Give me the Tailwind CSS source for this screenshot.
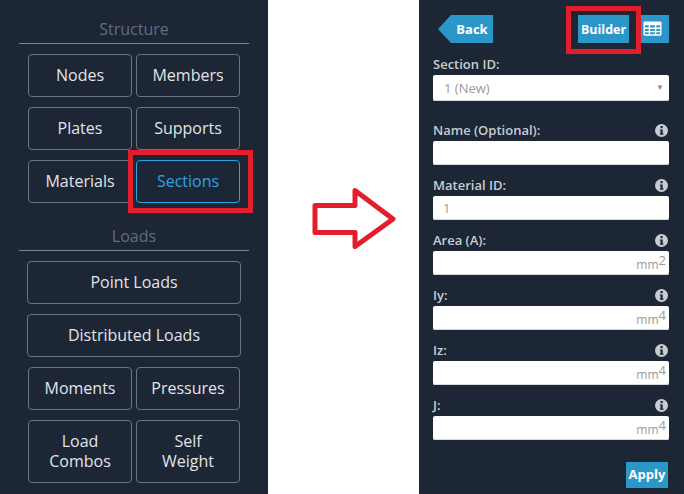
<!DOCTYPE html>
<html lang="en">

<head>
    <meta charset="UTF-8">
    <title>Sections</title>
    <script src="https://cdn.jsdelivr.net/npm/@tailwindcss/browser@4"></script>
</head>

<body class="bg-white">

    <div class="relative flex w-[684px] h-[494px] overflow-hidden font-['Open_Sans',sans-serif]">

        <!-- Left menu -->
        <aside class="w-[268px] h-full bg-[#1c2635] px-[19px] pt-[19px] shrink-0">
            <h2 class="h-[24px] border-b border-[#7b8494] text-center text-[16px] leading-[20px] text-[#626d80] box-content">Structure</h2>
            <div class="mt-[10px] px-[9px] grid grid-cols-2 gap-x-[4px] gap-y-[10px] text-[16px] text-[#e2e4e7]">
                <button class="h-[43px] pb-[2px] border border-[#6b7486] rounded-[4px]">Nodes</button>
                <button class="h-[43px] pb-[2px] border border-[#6b7486] rounded-[4px]">Members</button>
                <button class="h-[43px] pb-[2px] border border-[#6b7486] rounded-[4px]">Plates</button>
                <button class="h-[43px] pb-[2px] border border-[#6b7486] rounded-[4px]">Supports</button>
                <button class="h-[43px] pb-[2px] border border-[#6b7486] rounded-[4px]">Materials</button>
                <button class="h-[43px] pb-[2px] border border-[#2aa3ea] rounded-[4px] text-[#2aa3ea]">Sections</button>
            </div>

            <h2 class="mt-[23px] h-[24px] border-b border-[#7b8494] text-center text-[16px] leading-[20px] text-[#626d80] box-content">Loads</h2>
            <div class="mt-[10px] px-[8px] flex flex-col gap-y-[10px] text-[16px] text-[#e2e4e7]">
                <button class="h-[43px] pb-[2px] border border-[#6b7486] rounded-[4px]">Point Loads</button>
                <button class="h-[43px] pb-[2px] border border-[#6b7486] rounded-[4px]">Distributed Loads</button>
            </div>
            <div class="mt-[10px] px-[9px] grid grid-cols-2 gap-x-[4px] gap-y-[10px] text-[16px] leading-[20px] text-[#e2e4e7]">
                <button class="h-[43px] pb-[2px] border border-[#6b7486] rounded-[4px]">Moments</button>
                <button class="h-[43px] pb-[2px] border border-[#6b7486] rounded-[4px]">Pressures</button>
                <button class="h-[63px] pb-[2px] border border-[#6b7486] rounded-[4px]">Load<br>Combos</button>
                <button class="h-[63px] pb-[2px] border border-[#6b7486] rounded-[4px]">Self<br>Weight</button>
            </div>
        </aside>

        <!-- Arrow -->
        <div class="w-[151px] h-full bg-white shrink-0">
            <svg class="mt-[185px] ml-[42px]" width="88" height="66" viewBox="0 0 88 66" fill="#fff" stroke="#e31e2c" stroke-width="5" stroke-linejoin="round">
                <path d="M5 20.500H45V5.500L83 34L45 61.500V47.500H5Z"></path>
            </svg>
        </div>

        <!-- Section form -->
        <main class="flex-1 h-full bg-[#1c2635] pl-[14px] pr-[15px] pt-[15px]">
            <div class="flex items-center h-[28px]">
                <div class="w-0 h-0 border-y-[14px] border-y-transparent border-r-[13px] border-r-[#2b96c8] ml-[5px]"></div>
                <button class="h-[28px] w-[42px] pt-[2px] bg-[#2b96c8] text-white text-[13px] font-bold">Back</button>
                <button class="ml-[85px] h-[28px] w-[51px] pt-[2px] bg-[#2b96c8] text-white text-[12.500px] font-bold">Builder</button>
                <button class="ml-[12px] h-[28px] w-[28px] pb-[1px] bg-[#2b96c8] flex items-center pl-[2px]">
                    <svg width="19" height="15" viewBox="0 0 20 15" fill="#fff">
                        <path fill-rule="evenodd" d="M2 0H18A1.500 1.500 0 0 1 19.500 1.500V13.500A1.500 1.500 0 0 1 18 15H2A1.500 1.500 0 0 1 .5 13.500V1.500A1.500 1.500 0 0 1 2 0ZM2 4V6.500H6V4ZM7.500 4V6.500H12.500V4ZM14 4V6.500H18V4ZM2 8V10H6V8ZM7.500 8V10H12.500V8ZM14 8V10H18V8ZM2 11.500V13.500H6V11.500ZM7.500 11.500V13.500H12.500V11.500ZM14 11.500V13.500H18V11.500Z"></path>
                    </svg>
                </button>
            </div>

            <label class="block mt-[13px] h-[19px] text-[13px] leading-[16px] font-semibold text-[#c9ccd1]">Section ID:</label>
            <div class="h-[26px] bg-white rounded-[2px] shadow-[inset_0_-1px_0_#d5d7da] flex items-center justify-between pl-[11px] pr-[5px] text-[13px] text-[#9a9a9a]">
                <span class="pt-[1px]">1 (New)</span>
                <span class="text-[8px] leading-[8px] mb-[2px] text-[#8a8a8a]">▼</span>
            </div>

            <div class="mt-[21px] flex flex-col gap-y-[12px]">
                <div>
                    <div class="h-[19px] pr-[1px] flex justify-between items-start text-[13px] leading-[16px] font-semibold text-[#c9ccd1]">
                        <span>Name (Optional):</span>
                        <svg class="mt-[2px]" width="13" height="13" viewBox="0 0 13 13"><circle cx="6.500" cy="6.500" r="6.500" fill="#c9ccd1"></circle><rect x="5.500" y="2" width="2.200" height="2.200" fill="#1c2635"></rect><path d="M4.800 5.400H7.700V9.600H8.500V10.800H4.800V9.600H5.500V6.600H4.800Z" fill="#1c2635"></path></svg>
                    </div>
                    <div class="h-[24px] bg-white rounded-[2px] shadow-[inset_0_-1px_0_#d5d7da]"></div>
                </div>
                <div>
                    <div class="h-[19px] pr-[1px] flex justify-between items-start text-[13px] leading-[16px] font-semibold text-[#c9ccd1]">
                        <span>Material ID:</span>
                        <svg class="mt-[2px]" width="13" height="13" viewBox="0 0 13 13"><circle cx="6.500" cy="6.500" r="6.500" fill="#c9ccd1"></circle><rect x="5.500" y="2" width="2.200" height="2.200" fill="#1c2635"></rect><path d="M4.800 5.400H7.700V9.600H8.500V10.800H4.800V9.600H5.500V6.600H4.800Z" fill="#1c2635"></path></svg>
                    </div>
                    <div class="h-[24px] bg-white rounded-[2px] shadow-[inset_0_-1px_0_#d5d7da] pl-[10px] text-[13px] leading-[24px] text-[#9a9a9a]">1</div>
                </div>
                <div>
                    <div class="h-[19px] pr-[1px] flex justify-between items-start text-[13px] leading-[16px] font-semibold text-[#c9ccd1]">
                        <span>Area (A):</span>
                        <svg class="mt-[2px]" width="13" height="13" viewBox="0 0 13 13"><circle cx="6.500" cy="6.500" r="6.500" fill="#c9ccd1"></circle><rect x="5.500" y="2" width="2.200" height="2.200" fill="#1c2635"></rect><path d="M4.800 5.400H7.700V9.600H8.500V10.800H4.800V9.600H5.500V6.600H4.800Z" fill="#1c2635"></path></svg>
                    </div>
                    <div class="h-[24px] bg-white rounded-[2px] shadow-[inset_0_-1px_0_#d5d7da] flex justify-end items-start pr-[3px] text-[12px] leading-[14px] text-[#9a9a9a]"><span class="mt-[7px]">mm</span><span class="mt-[2px] text-[13px]">2</span></div>
                </div>
                <div>
                    <div class="h-[19px] pr-[1px] flex justify-between items-start text-[13px] leading-[16px] font-semibold text-[#c9ccd1]">
                        <span>Iy:</span>
                        <svg class="mt-[2px]" width="13" height="13" viewBox="0 0 13 13"><circle cx="6.500" cy="6.500" r="6.500" fill="#c9ccd1"></circle><rect x="5.500" y="2" width="2.200" height="2.200" fill="#1c2635"></rect><path d="M4.800 5.400H7.700V9.600H8.500V10.800H4.800V9.600H5.500V6.600H4.800Z" fill="#1c2635"></path></svg>
                    </div>
                    <div class="h-[24px] bg-white rounded-[2px] shadow-[inset_0_-1px_0_#d5d7da] flex justify-end items-start pr-[3px] text-[12px] leading-[14px] text-[#9a9a9a]"><span class="mt-[7px]">mm</span><span class="mt-[2px] text-[13px]">4</span></div>
                </div>
                <div>
                    <div class="h-[19px] pr-[1px] flex justify-between items-start text-[13px] leading-[16px] font-semibold text-[#c9ccd1]">
                        <span>Iz:</span>
                        <svg class="mt-[2px]" width="13" height="13" viewBox="0 0 13 13"><circle cx="6.500" cy="6.500" r="6.500" fill="#c9ccd1"></circle><rect x="5.500" y="2" width="2.200" height="2.200" fill="#1c2635"></rect><path d="M4.800 5.400H7.700V9.600H8.500V10.800H4.800V9.600H5.500V6.600H4.800Z" fill="#1c2635"></path></svg>
                    </div>
                    <div class="h-[24px] bg-white rounded-[2px] shadow-[inset_0_-1px_0_#d5d7da] flex justify-end items-start pr-[3px] text-[12px] leading-[14px] text-[#9a9a9a]"><span class="mt-[7px]">mm</span><span class="mt-[2px] text-[13px]">4</span></div>
                </div>
                <div>
                    <div class="h-[19px] pr-[1px] flex justify-between items-start text-[13px] leading-[16px] font-semibold text-[#c9ccd1]">
                        <span>J:</span>
                        <svg class="mt-[2px]" width="13" height="13" viewBox="0 0 13 13"><circle cx="6.500" cy="6.500" r="6.500" fill="#c9ccd1"></circle><rect x="5.500" y="2" width="2.200" height="2.200" fill="#1c2635"></rect><path d="M4.800 5.400H7.700V9.600H8.500V10.800H4.800V9.600H5.500V6.600H4.800Z" fill="#1c2635"></path></svg>
                    </div>
                    <div class="h-[24px] bg-white rounded-[2px] shadow-[inset_0_-1px_0_#d5d7da] flex justify-end items-start pr-[3px] text-[12px] leading-[14px] text-[#9a9a9a]"><span class="mt-[7px]">mm</span><span class="mt-[2px] text-[13px]">4</span></div>
                </div>
            </div>

            <div class="mt-[22px] flex justify-end pr-[1px]">
                <button class="h-[26px] w-[42px] bg-[#2b96c8] text-white text-[13px] font-bold">Apply</button>
            </div>
        </main>

        <!-- Red highlight boxes over the screenshots -->
        <div class="absolute left-[128px] top-[150px] w-[125px] h-[63px] border-[5px] border-[#e31e2c]"></div>
        <div class="absolute left-[566px] top-[6px] w-[75px] h-[48px] border-[5px] border-[#e31e2c]"></div>
    </div>

</body>

</html>
